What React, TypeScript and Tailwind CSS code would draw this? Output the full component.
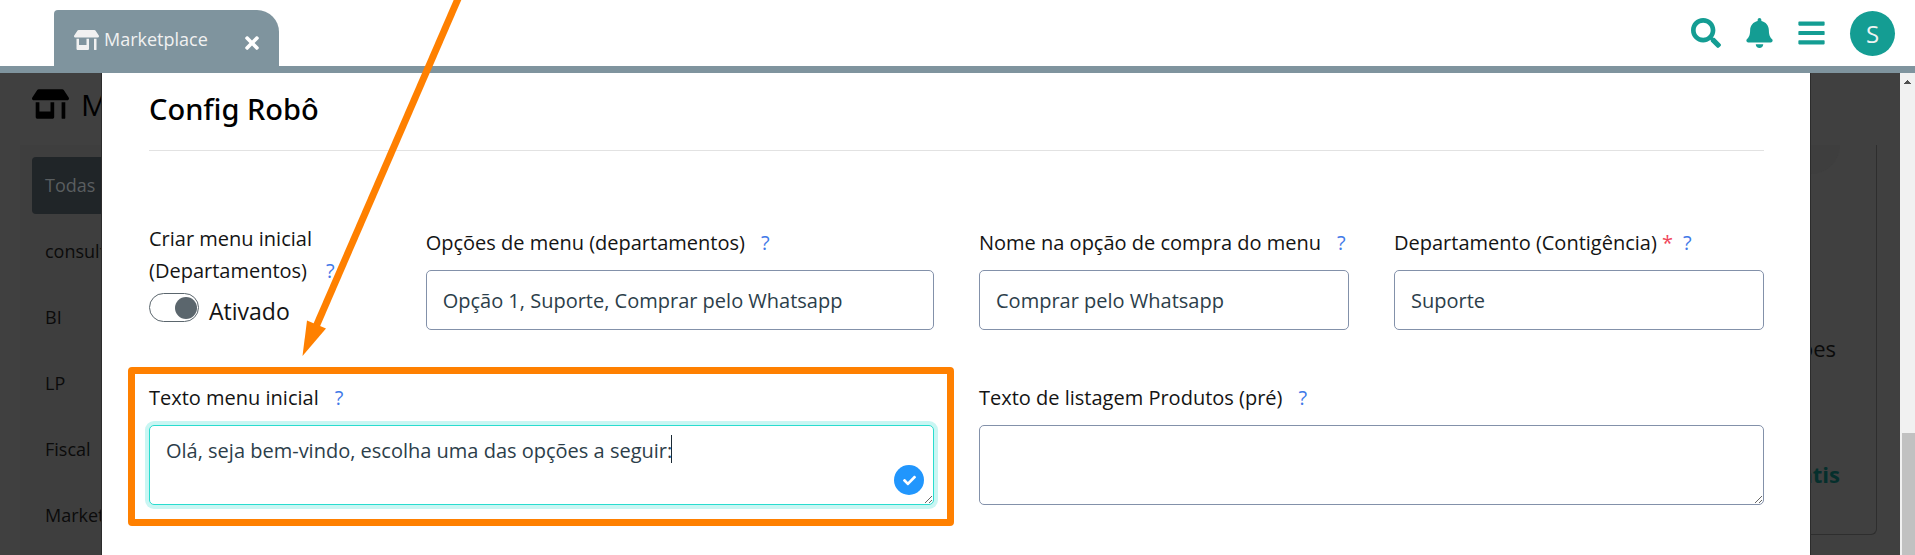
import type { ReactNode } from 'react';
import { FaBars, FaBell, FaCheck, FaSearch, FaStoreAlt, FaTimes } from 'react-icons/fa';

const categories = ['Todas', 'consultoria', 'BI', 'LP', 'Fiscal', 'Marketing'];

const fieldClass =
  'block w-full rounded-[5px] border border-[#8391aa] bg-white px-4 text-[20px] leading-[28px] text-[#2c3e4a] outline-none';

function Help() {
  return (
    <button type="button" className="text-[#4179e8]">
      ?
    </button>
  );
}

function Label({ id, required, children }: { id: string; required?: boolean; children: ReactNode }) {
  return (
    <div className={required ? 'mb-[11px] flex gap-[10px]' : 'mb-[11px] flex gap-4'}>
      <label htmlFor={id}>
        {children}
        {required && <span className="text-[#f0455a]"> *</span>}
      </label>
      <Help />
    </div>
  );
}

function TopBar() {
  return (
    <header className="flex h-[73px] items-end justify-between border-b-[7px] border-[#7f949e] bg-white pl-[54px] pr-5">
      <div className="flex h-14 w-[225px] items-center rounded-tl-[4px] rounded-tr-[22px] bg-[#7f949e] pl-5 pr-[17px] text-[#f1f1f1]">
        <a href="#marketplace" className="flex items-center gap-[5px] pt-[3px] text-[18px]">
          <FaStoreAlt className="h-5 w-[25px]" />
          Marketplace
        </a>
        <button type="button" aria-label="Fechar aba" className="ml-auto pt-[9px] text-white">
          <FaTimes size={20} />
        </button>
      </div>
      <nav className="flex h-[66px] items-center gap-[25px] text-[#149d93]">
        <button type="button" aria-label="Pesquisar">
          <FaSearch size={30} />
        </button>
        <button type="button" aria-label="Notificações">
          <FaBell className="h-[30px] w-[27px]" />
        </button>
        <button type="button" aria-label="Menu">
          <FaBars className="h-[30px] w-[27px]" />
        </button>
        <button
          type="button"
          className="flex size-[45px] items-center justify-center rounded-full bg-[#149d93] pt-[2px] text-[24px] text-[#eef3f2]"
        >
          S
        </button>
      </nav>
    </header>
  );
}

function Backdrop() {
  return (
    <div className="flex min-h-full justify-between bg-[#404040] text-[18px] text-[#0b0b0b]">
      <aside className="flex w-[102px] flex-col overflow-hidden">
        <h1 className="flex h-[72px] items-center gap-3 overflow-hidden pb-[10px] pl-8 text-[30px] text-black">
          <FaStoreAlt className="h-[30px] w-[37px] shrink-0" />
          M
        </h1>
        <ul className="ml-5 flex flex-1 flex-col gap-[9px] bg-[#3e3e3e] pl-3 pt-3">
          {categories.map((name, i) => (
            <li key={name}>
              <a
                href="#categoria"
                className={
                  i === 0
                    ? 'flex h-[57px] items-center rounded-l-[4px] bg-[#202528] pl-[13px] text-[#5a5e60]'
                    : 'flex h-[57px] items-center pl-[13px]'
                }
              >
                {name}
              </a>
            </li>
          ))}
        </ul>
      </aside>
      <section className="mr-[23px] mt-[72px] flex h-[390px] w-80 flex-col items-end rounded-b-[6px] border-x border-b border-[#2e2e2e] pr-9">
        <div className="h-[29px] w-[120px] rounded-br-[30px] bg-[#3e3e3e]" />
        <p className="mt-[158px] pr-1 text-[22px] leading-8">Integrações</p>
        <strong className="mt-[94px] text-[22px] leading-8 text-[#052f2c]">Grátis</strong>
      </section>
    </div>
  );
}

function ConfigDialog() {
  return (
    <div
      role="dialog"
      aria-label="Config Robô"
      className="absolute inset-y-0 left-[102px] right-[90px] bg-white px-[47px] pr-[46px] text-[20px] leading-8 text-[#141414] outline outline-[#2c2c2c]"
    >
      <h2 className="flex h-[78px] items-center border-b border-[#e2e2e2] pb-[6px] font-['Noto_Sans','Open_Sans',sans-serif] text-[29px] font-medium text-black">
        Config Robô
      </h2>

      <form className="grid grid-cols-12 gap-x-[45px] pt-[72px]">
        <div className="col-span-2">
          <div className="flex items-end gap-[14px]">
            <label htmlFor="criar-menu" className="whitespace-nowrap">
              Criar menu inicial
              <br />
              (Departamentos)
            </label>
            <Help />
          </div>
          <label className="mt-[6px] flex items-start gap-[10px] text-[23px]">
            <span className="relative flex">
              <input
                id="criar-menu"
                type="checkbox"
                defaultChecked
                className="h-[29px] w-[50px] appearance-none rounded-full border border-[#5b666d] bg-white"
              />
              <span className="pointer-events-none absolute right-[2px] top-1 size-[22px] rounded-full bg-[#5b666d]" />
            </span>
            <span className="pt-[2px]">Ativado</span>
          </label>
        </div>

        <div className="col-span-4 pt-1">
          <Label id="opcoes">Opções de menu (departamentos)</Label>
          <input
            id="opcoes"
            className={`${fieldClass} h-[60px]`}
            defaultValue="Opção 1, Suporte, Comprar pelo Whatsapp"
          />
        </div>
        <div className="col-span-3 pt-1">
          <Label id="compra">Nome na opção de compra do menu</Label>
          <input id="compra" className={`${fieldClass} h-[60px]`} defaultValue="Comprar pelo Whatsapp" />
        </div>
        <div className="col-span-3 pt-1">
          <Label id="departamento" required>
            Departamento (Contigência)
          </Label>
          <input id="departamento" className={`${fieldClass} h-[60px]`} defaultValue="Suporte" />
        </div>

        <div className="relative col-span-6 mt-[52px]">
          <Label id="texto-menu">Texto menu inicial</Label>
          <textarea
            id="texto-menu"
            className="block h-20 w-full rounded-[5px] border border-[#2adccf] bg-white px-4 py-[10px] text-[20px] leading-[30px] text-[#2c3e4a] shadow-[0_0_0_4px_#c9f6f3] outline-none"
            defaultValue="Olá, seja bem-vindo, escolha uma das opções a seguir:"
          />
          <span className="absolute left-[522px] top-[53px] h-7 w-px bg-[#1b2a34]" />
          <span className="absolute bottom-[10px] right-[10px] flex size-[30px] items-center justify-center rounded-full bg-[#2196fd] text-white">
            <FaCheck size={13} />
          </span>
          <div className="pointer-events-none absolute -bottom-[21px] -left-[21px] -right-5 -top-[15px] rounded-[4px] border-[7px] border-[#ff8000]" />
        </div>
        <div className="col-span-6 mt-[52px]">
          <Label id="texto-listagem">Texto de listagem Produtos (pré)</Label>
          <textarea id="texto-listagem" className={`${fieldClass} h-20 py-[10px]`} />
        </div>
      </form>
    </div>
  );
}

function PageScrollbar() {
  return (
    <div className="flex w-[15px] flex-col items-center justify-between bg-[#f1f1f1]">
      <svg width="7" height="4" viewBox="0 0 7 4" className="mt-[7px]" aria-hidden="true">
        <path d="M3 0h1v1h1v1h1v1h1v1H0V3h1V2h1V1h1z" fill="#505050" />
      </svg>
      <div className="h-[122px] w-[13px] self-end bg-[#c1c1c1]" />
    </div>
  );
}

function PointerArrow() {
  return (
    <svg
      width="480"
      height="360"
      viewBox="0 0 480 360"
      className="pointer-events-none absolute left-0 top-0"
      aria-hidden="true"
    >
      <path d="M459.2-4 315 329" stroke="#ff8000" strokeWidth="7" />
      <path d="M302.5 356 307 320.5 326 328.5z" fill="#ff8000" />
    </svg>
  );
}

export default function App() {
  return (
    <div className="relative flex h-screen flex-col overflow-hidden font-['Open_Sans','Noto_Sans',sans-serif]">
      <TopBar />
      <div className="flex min-h-0 flex-1">
        <main className="relative flex-1 overflow-hidden bg-[#404040]">
          <Backdrop />
          <ConfigDialog />
        </main>
        <PageScrollbar />
      </div>
      <PointerArrow />
    </div>
  );
}
